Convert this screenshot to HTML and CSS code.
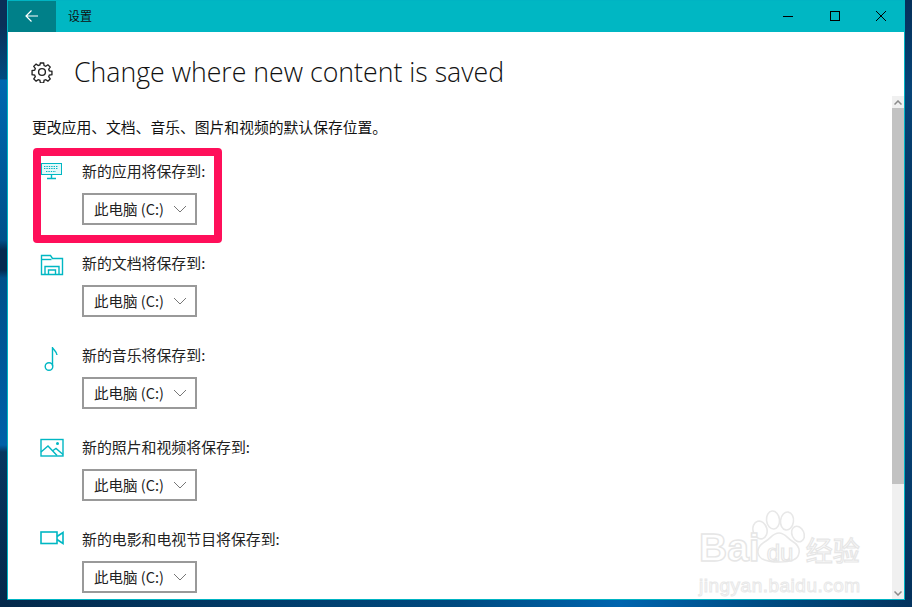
FILE: index.html

```html
<!DOCTYPE html>
<html lang="zh-CN">
<head>
  <meta charset="UTF-8">
  <title>设置</title>
  <link rel="stylesheet" href="styles.css">
</head>
<body>

<div class="window">
  <header class="titlebar">
    <div class="back">
      <svg width="16" height="16" viewBox="0 0 16 16" fill="none" stroke="#fff" stroke-width="1.2"><path d="M2 8h12M7.500 2.500 2 8l5.500 5.500"/></svg>
    </div>
    <div class="apptitle">设置</div>
    <div class="controls">
      <div class="ctl"><svg width="12" height="12" viewBox="0 0 12 12" stroke="#000"><path d="M0 6.500h10"/></svg></div>
      <div class="ctl"><svg width="12" height="12" viewBox="0 0 12 12" stroke="#000" fill="none"><rect x="1.500" y="1.500" width="9" height="9"/></svg></div>
      <div class="ctl"><svg width="12" height="12" viewBox="0 0 12 12" stroke="#000" fill="none"><path d="M1 1l10 10M11 1 1 11"/></svg></div>
    </div>
  </header>

  <div class="pagehead">
    <svg class="gear" width="22" height="22" viewBox="0 0 22 22" fill="none" stroke="#222" stroke-width="1.4">
      <circle cx="11" cy="11" r="3.400"/>
      <path d="M9.300 1.600h3.400l.5 2.700 1.700.7 2.300-1.600 2.400 2.400-1.600 2.300.7 1.700 2.700.5v3.400l-2.700.5-.7 1.700 1.600 2.300-2.400 2.400-2.300-1.600-1.700.7-.5 2.700H9.300l-.5-2.700-1.700-.7-2.300 1.600-2.400-2.400 1.600-2.300-.7-1.700-2.700-.5V9.600l2.700-.5.7-1.700-1.600-2.300 2.400-2.400 2.300 1.600 1.700-.7z" transform="translate(.5 .5) scale(.955)"/>
    </svg>
    <h1>Change where new content is saved</h1>
  </div>

  <div class="body">
    <div class="content">
      <p class="intro">更改应用、文档、音乐、图片和视频的默认保存位置。</p>

      <div class="row">
        <svg class="icon" width="24" height="20" viewBox="0 0 24 20" fill="none" stroke="#00b7c3">
          <rect x="1.500" y="1.500" width="20" height="11" fill="#e4f8f9"/>
          <path d="M4 4.500h14M4 6.500h14M6 9.500h10" stroke-dasharray="1.400 1"/>
          <path d="M11.500 13v3M7 16.500h9" stroke-width="1.400"/>
        </svg>
        <div>
          <div class="label">新的应用将保存到:</div>
          <div class="drive">此电脑 (C:)<svg class="chev" width="14" height="8" viewBox="0 0 14 8" fill="none" stroke="#777"><path d="M1 1l6 6 6-6"/></svg></div>
        </div>
      </div>

      <div class="row">
        <svg class="icon" width="24" height="22" viewBox="0 0 24 22" fill="none" stroke="#00b7c3" stroke-width="1.400">
          <path d="M1.500 20.500V1.500h9l2 3h10v16z"/>
          <path d="M1.500 5.500h10"/>
          <path d="M5 20.500v-8h14v8M8.500 20.500v-4.500h7v4.500"/>
        </svg>
        <div>
          <div class="label">新的文档将保存到:</div>
          <div class="drive">此电脑 (C:)<svg class="chev" width="14" height="8" viewBox="0 0 14 8" fill="none" stroke="#777"><path d="M1 1l6 6 6-6"/></svg></div>
        </div>
      </div>

      <div class="row">
        <svg class="icon" width="24" height="26" viewBox="0 0 24 26" fill="none" stroke="#00b7c3" stroke-width="1.400">
          <circle cx="9" cy="20.500" r="3.800"/>
          <path d="M12.500 20V1c.5 3 4 4 4.500 8"/>
        </svg>
        <div>
          <div class="label">新的音乐将保存到:</div>
          <div class="drive">此电脑 (C:)<svg class="chev" width="14" height="8" viewBox="0 0 14 8" fill="none" stroke="#777"><path d="M1 1l6 6 6-6"/></svg></div>
        </div>
      </div>

      <div class="row">
        <svg class="icon" width="24" height="20" viewBox="0 0 24 20" fill="none" stroke="#00b7c3" stroke-width="1.400">
          <rect x="1" y="1.500" width="22" height="16.500"/>
          <path d="M1 14l7-6 9 9.500M13 12.500l3-2 7 6"/>
          <circle cx="17.500" cy="5.500" r=".8"/>
        </svg>
        <div>
          <div class="label">新的照片和视频将保存到:</div>
          <div class="drive">此电脑 (C:)<svg class="chev" width="14" height="8" viewBox="0 0 14 8" fill="none" stroke="#777"><path d="M1 1l6 6 6-6"/></svg></div>
        </div>
      </div>

      <div class="row">
        <svg class="icon" width="24" height="16" viewBox="0 0 24 16" fill="none" stroke="#00b7c3" stroke-width="1.600">
          <rect x="1" y="2" width="16" height="11.500"/>
          <path d="M17 6.500l6-4v11l-6-4"/>
        </svg>
        <div>
          <div class="label">新的电影和电视节目将保存到:</div>
          <div class="drive">此电脑 (C:)<svg class="chev" width="14" height="8" viewBox="0 0 14 8" fill="none" stroke="#777"><path d="M1 1l6 6 6-6"/></svg></div>
        </div>
      </div>

      <div class="highlight"></div>
    </div>

    <div class="scrollbar">
      <div class="arrow"><svg width="8" height="5" viewBox="0 0 8 5" fill="none" stroke="#8a8a8a" stroke-width="1.500"><path d="M.5 4.500 4 1l3.500 3.500"/></svg></div>
      <div class="thumb"></div>
      <div class="track"></div>
      <div class="arrow"><svg width="8" height="5" viewBox="0 0 8 5" fill="none" stroke="#8a8a8a" stroke-width="1.500"><path d="M.5.500 4 4 7.500.500"/></svg></div>
    </div>
  </div>

  <div class="watermark">
    <svg class="paw" width="62" height="56" viewBox="0 0 62 56" fill="#fff" stroke="#e8e8e8" stroke-width="1.600">
      <ellipse cx="12" cy="21" rx="7" ry="9" transform="rotate(-15 12 21)"/>
      <ellipse cx="25" cy="11" rx="6.500" ry="9" transform="rotate(-6 25 11)"/>
      <ellipse cx="39" cy="12" rx="6.500" ry="9" transform="rotate(8 39 12)"/>
      <ellipse cx="50" cy="25" rx="6" ry="8" transform="rotate(-25 50 25)"/>
      <path d="M31 24c6 0 8 5 13 8 5 3 8 7 7 12-1 7-8 9-20 9s-20-2-21-9c-1-5 3-9 8-12 5-3 7-8 13-8z"/>
    </svg>
    <div class="wm-top"><span class="wm-bai">Bai</span><span class="wm-du">du</span><span class="wm-cn">经验</span></div>
    <div class="wm-url">jingyan.baidu.com</div>
  </div>
</div>

</body>
</html>
```

FILE: styles.css

```css
html, body {
  height: 100%;
}
body {
  margin: 0;
  overflow: hidden;
  font-family: "Noto Sans CJK SC", "Open Sans", sans-serif;
  background:
    linear-gradient(180deg, #0a3058 0, #0a3058 25px, #004a80 79px, #0068b0 80px, #00508a 240px, #042a50 250px, #042a50 270px, #00508a 278px, #0060a8 445px, #06365f 452px, #04284a 607px) left top / 8px 100% no-repeat,
    linear-gradient(90deg, #04284a 0, #004a80 50%, #0064ae 68%, #004a80 85%, #04345f 100%) left bottom / 100% 8px no-repeat,
    linear-gradient(180deg, #05305a 0, #064478 90px, #03305a 260px, #064478 400px, #04305a 607px);
}
.window {
  position: relative;
  box-sizing: border-box;
  width: 898px;
  height: 600px;
  margin: 0 0 0 7px;
  border: 1px solid #00b4c3;
  background-color: #fff;
  display: flex;
  flex-direction: column;
}
.titlebar {
  flex: none;
  height: 31px;
  display: flex;
  align-items: stretch;
  background-color: #00b7c3;
}
.back {
  width: 48px;
  padding-bottom: 2px;
  box-sizing: border-box;
  display: flex;
  align-items: center;
  justify-content: center;
  background-color: #008089;
}
.apptitle {
  flex: 1;
  padding-left: 12px;
  font-size: 12px;
  line-height: 29px;
  color: #111;
}
.controls {
  display: flex;
  padding-bottom: 2px;
}
.ctl {
  width: 46px;
  display: flex;
  align-items: center;
  justify-content: center;
}
.pagehead {
  flex: none;
  height: 64px;
  display: flex;
  align-items: center;
  padding-left: 23px;
  box-sizing: border-box;
}
.gear {
  flex: none;
  margin-right: 21px;
  margin-top: 15px;
}
h1 {
  margin: 14px 0 0;
  font-family: "Open Sans", sans-serif;
  font-weight: 300;
  font-size: 26.7px;
  color: #111;
  white-space: nowrap;
}
.body {
  flex: 1;
  min-height: 0;
  display: flex;
}
.content {
  position: relative;
  flex: 1;
  overflow: hidden;
  padding-left: 24px;
}
.intro {
  margin: 0;
  padding-top: 21px;
  height: 21px;
  font-size: 14.8px;
  line-height: 20px;
  color: #111;
  white-space: nowrap;
}
.row {
  display: flex;
  height: 92px;
}
.intro + .row {
  margin-top: 24px;
}
.icon {
  flex: none;
  width: 24px;
  margin-right: 18px;
  margin-left: 8px;
}
.label {
  height: 21px;
  margin-top: -1px;
  font-size: 14.9px;
  line-height: 20px;
  color: #222;
  white-space: nowrap;
}
.drive {
  box-sizing: border-box;
  width: 115px;
  height: 32px;
  margin-top: 11px;
  padding-left: 10px;
  padding-right: 8px;
  padding-bottom: 1px;
  display: flex;
  align-items: center;
  justify-content: space-between;
  border: 2px solid #999;
  font-size: 14.5px;
  color: #222;
  white-space: nowrap;
}
.highlight {
  position: absolute;
  left: 25px;
  top: 52px;
  width: 189px;
  height: 95px;
  box-sizing: border-box;
  border: 8px solid #ff0f5a;
  border-radius: 4px;
}
.scrollbar {
  flex: none;
  width: 12px;
  display: flex;
  flex-direction: column;
  background-color: #f0f0f0;
}
.arrow {
  height: 12px;
  display: flex;
  align-items: center;
  justify-content: center;
}
.thumb {
  height: 376px;
  background-color: #c2c2c2;
}
.track {
  flex: 1;
}
.watermark {
  position: absolute;
  left: 691px;
  top: 508px;
  width: 170px;
  color: #fff;
  font-family: "Liberation Sans", sans-serif;
}
.paw {
  position: absolute;
  left: 49px;
  top: 0;
}
.wm-top {
  position: relative;
  display: flex;
  align-items: baseline;
  padding-top: 16px;
  -webkit-text-stroke: 1.400px #e6e6e6;
}
.wm-bai {
  font-size: 39px;
  font-weight: bold;
  line-height: 46px;
}
.wm-du {
  font-size: 24px;
  width: 34px;
  margin: 0 5px 0 7px;
  -webkit-text-stroke: 1.200px #e6e6e6;
}
.wm-cn {
  font-family: "Noto Sans CJK SC", sans-serif;
  font-size: 27px;
  line-height: 30px;
  -webkit-text-stroke: 1.200px #e6e6e6;
}
.wm-url {
  position: relative;
  margin-top: 3px;
  font-size: 19px;
  line-height: 24px;
  -webkit-text-stroke: 1px #e8e8e8;
  letter-spacing: .5px;
  white-space: nowrap;
}
```
